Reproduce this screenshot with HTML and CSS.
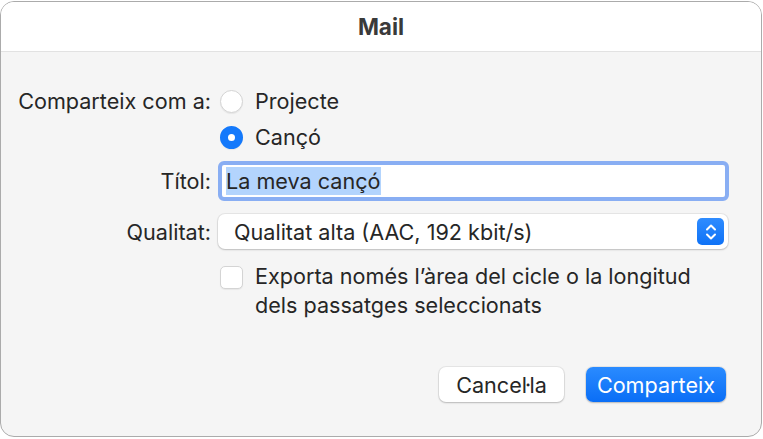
FILE: index.html
```html
<!DOCTYPE html>
<html lang="ca">
<head>
    <meta charset="UTF-8">
    <meta name="viewport" content="width=device-width, initial-scale=1.0">
    <title>Mail</title>
    <link rel="stylesheet" href="styles.css">
</head>
<body>
    <div class="window">
        <div class="titlebar">Mail</div>
        <div class="content">
            <div class="form">
                <div class="label row-radio">Comparteix com a:</div>
                <div class="control row-radio">
                    <span class="radio"></span>
                    <span>Projecte</span>
                </div>

                <div class="label row-radio"></div>
                <div class="control row-radio">
                    <span class="radio checked"></span>
                    <span>Cançó</span>
                </div>

                <div class="label row-field">Títol:</div>
                <div class="control row-field">
                    <div class="textfield"><span class="selected">La meva cançó</span></div>
                </div>

                <div class="label row-popup">Qualitat:</div>
                <div class="control row-popup">
                    <div class="popup">
                        <span>Qualitat alta (AAC, 192 kbit/s)</span>
                        <span class="stepper">
                            <svg width="14" height="20" viewBox="0 0 14 20">
                                <path d="M3 7.5 L7 3.5 L11 7.5 M3 12.5 L7 16.5 L11 12.5" fill="none" stroke="#fff" stroke-width="2" stroke-linecap="round" stroke-linejoin="round"/>
                            </svg>
                        </span>
                    </div>
                </div>

                <div class="label row-check"></div>
                <div class="control row-check">
                    <span class="checkbox"></span>
                    <span class="check-text">Exporta només l’àrea del cicle o la longitud dels passatges seleccionats</span>
                </div>
            </div>
            <div class="buttons">
                <button class="btn">Cancel·la</button>
                <button class="btn primary">Comparteix</button>
            </div>
        </div>
    </div>
</body>
</html>
```

FILE: styles.css
```css
body {
    margin: 0;
    background: #fff;
    font-family: Inter, "Noto Sans", sans-serif;
    font-size: 21.6px;
    color: #262626;
}
.window {
    box-sizing: border-box;
    width: 762px;
    height: 436px;
    margin: 1px 0 0 0;
    border: 1px solid #ababab;
    border-radius: 14px;
    overflow: hidden;
    background: #f5f5f5;
    display: flex;
    flex-direction: column;
}
.titlebar {
    height: 48px;
    padding-bottom: 1px;
    background: #fff;
    border-bottom: 1px solid #e2e2e2;
    display: flex;
    align-items: center;
    justify-content: center;
    font-weight: 700;
    font-size: 22.5px;
    color: #3a3a3a;
}
.content {
    flex: 1;
    padding: 37px 33px 0 0;
    display: flex;
    flex-direction: column;
}
.form {
    display: grid;
    grid-template-columns: 210px 1fr;
    column-gap: 7px;
}
.label {
    text-align: right;
    display: flex;
    align-items: center;
    justify-content: flex-end;
}
.control {
    display: flex;
    align-items: center;
}
.row-radio {
    height: 24px;
    margin-bottom: 12px;
}
.row-field {
    height: 40px;
    margin-bottom: 13px;
}
.row-popup {
    height: 35px;
    margin-bottom: 15px;
}
.row-check {
    align-items: flex-start;
}
.radio {
    box-sizing: border-box;
    width: 23px;
    height: 23px;
    margin: 0 12px 0 2px;
    border-radius: 50%;
    background: #fff;
    border: 1px solid #d4d4d4;
    box-shadow: 0 1px 1px rgba(0,0,0,0.06);
}
.radio.checked {
    border: 8px solid #1479fb;
    background: #fff;
}
.textfield {
    box-sizing: border-box;
    width: 511px;
    height: 40px;
    border: 4px solid #89aef3;
    border-radius: 6px;
    background: #fff;
    padding: 2px 4px;
    display: flex;
    align-items: center;
}
.selected {
    background: #b3d4fd;
    line-height: 28px;
    padding-right: 1px;
}
.popup {
    box-sizing: border-box;
    width: 510px;
    height: 35px;
    background: #fff;
    border-radius: 7px;
    box-shadow: 0 0 0 1px rgba(0,0,0,0.06), 0 1px 2px rgba(0,0,0,0.18);
    display: flex;
    align-items: center;
    justify-content: space-between;
    padding: 0 4px 0 16px;
}
.stepper {
    width: 27px;
    height: 27px;
    border-radius: 5px;
    background: linear-gradient(#2f8cff, #0f72f6);
    display: flex;
    align-items: center;
    justify-content: center;
}
.checkbox {
    box-sizing: border-box;
    flex: none;
    width: 23px;
    height: 23px;
    margin: 2px 12px 0 2px;
    border-radius: 5px;
    background: #fff;
    border: 1px solid #d4d4d4;
    box-shadow: 0 1px 1px rgba(0,0,0,0.06);
}
.check-text {
    line-height: 29px;
    margin-top: -2px;
    width: 460px;
}
.buttons {
    display: flex;
    justify-content: flex-end;
    gap: 22px;
    margin-top: auto;
    margin-bottom: 34px;
    margin-right: 2px;
}
.btn {
    font-family: inherit;
    font-size: 21.6px;
    color: #262626;
    height: 35px;
    padding: 0 17px;
    border: none;
    border-radius: 7px;
    background: #fff;
    box-shadow: 0 0 0 1px rgba(0,0,0,0.06), 0 1px 2px rgba(0,0,0,0.2);
}
.btn.primary {
    color: #fff;
    padding: 0 11px;
    background: linear-gradient(#2a8bff, #0a6ef6);
}
```
